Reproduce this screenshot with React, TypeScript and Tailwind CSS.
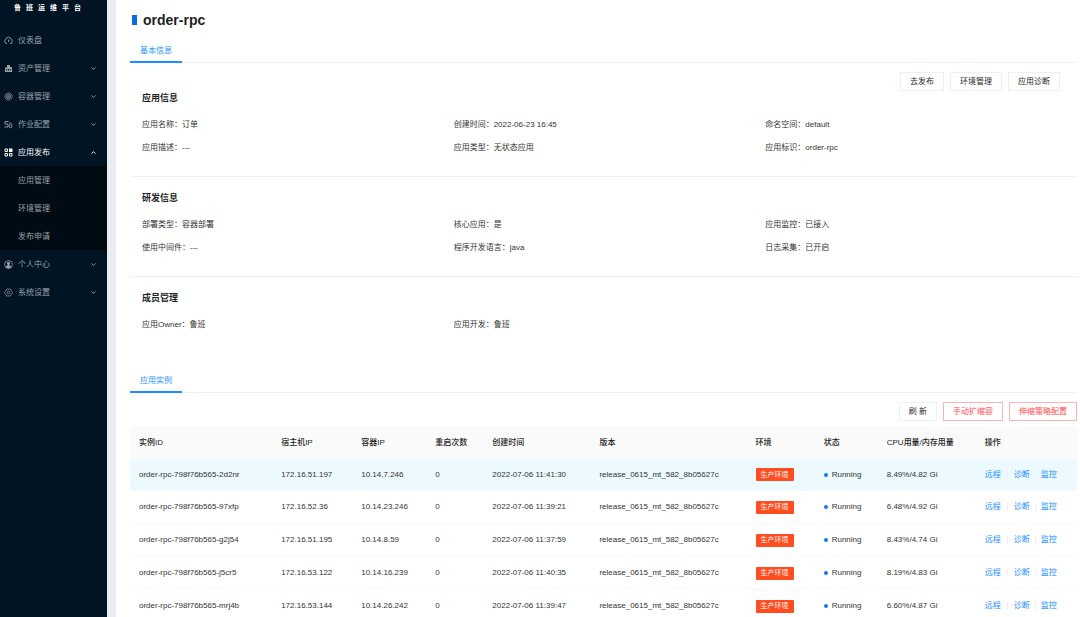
import type { ReactNode } from 'react'
import { ChevronDown, ChevronUp } from 'lucide-react'

interface MenuItem {
  label: string
  icon: ReactNode
  children?: string[]
  open?: boolean
  leaf?: boolean
}

interface Instance {
  id: string
  hostIp: string
  podIp: string
  createdAt: string
  usage: string
}

const iconClass = 'w-[9px] h-[9px] shrink-0'

const menu: MenuItem[] = [
  {
    label: '仪表盘',
    leaf: true,
    icon: (
      <svg className={iconClass} viewBox="0 0 18 18" fill="none" stroke="currentColor" strokeWidth={1.8}>
        <path d="M6 15H3.200A7.500 7.500 0 1 1 14.800 15H12" />
        <path d="M9 12l1-5" strokeWidth={2} />
      </svg>
    ),
  },
  {
    label: '资产管理',
    icon: (
      <svg className={iconClass} viewBox="0 0 18 18" fill="currentColor">
        <path d="M6 2h6v4h4v10H2V7h4zM4.500 10v3h2v-3zm3.500 0v3h2v-3zm3.500 0v3h2v-3z" fillRule="evenodd" />
      </svg>
    ),
  },
  {
    label: '容器管理',
    icon: (
      <svg className={iconClass} viewBox="0 0 18 18" fill="none" stroke="currentColor" strokeWidth={1.8}>
        <circle cx="9" cy="9" r="7.200" strokeDasharray="3 1" />
        <circle cx="9" cy="9" r="4.200" />
        <circle cx="9" cy="9" r="1.400" />
      </svg>
    ),
  },
  {
    label: '作业配置',
    icon: (
      <svg className={iconClass} viewBox="0 0 18 18" fill="none" stroke="currentColor" strokeWidth={1.8}>
        <path d="M9 3H2v5h6v6H1M10 6h3l3 3" />
        <circle cx="13" cy="12.500" r="3" />
      </svg>
    ),
  },
  {
    label: '应用发布',
    open: true,
    children: ['应用管理', '环境管理', '发布申请'],
    icon: (
      <svg className={iconClass} viewBox="0 0 18 18" fill="none" stroke="currentColor" strokeWidth={2}>
        <path d="M2 2h5v5H2zM2 11h5v5H2zM11 11h5v5h-5z" />
        <path d="M10 1h7v7h-7z" fill="currentColor" stroke="none" />
      </svg>
    ),
  },
  {
    label: '个人中心',
    icon: (
      <svg className={iconClass} viewBox="0 0 18 18" fill="none" stroke="currentColor" strokeWidth={1.5}>
        <circle cx="9" cy="9" r="8" />
        <path d="M9 3.5a3 3 0 0 1 1.8 5.5v1.5l3 1.5v2.5a7 7 0 0 1-9.6 0V12l3-1.5V9A3 3 0 0 1 9 3.5z" fill="currentColor" stroke="none" />
      </svg>
    ),
  },
  {
    label: '系统设置',
    icon: (
      <svg className={iconClass} viewBox="0 0 18 18" fill="none" stroke="currentColor" strokeWidth={1.4}>
        <path d="M5.5 2h7L17 9l-4.500 7h-7L1 9z" strokeLinejoin="round" />
        <circle cx="9" cy="9" r="2.600" />
      </svg>
    ),
  },
]

const sections = [
  {
    title: '应用信息',
    fields: [
      ['应用名称', '订单'],
      ['创建时间', '2022-06-23 16:45'],
      ['命名空间', 'default'],
      ['应用描述', '---'],
      ['应用类型', '无状态应用'],
      ['应用标识', 'order-rpc'],
    ],
  },
  {
    title: '研发信息',
    fields: [
      ['部署类型', '容器部署'],
      ['核心应用', '是'],
      ['应用监控', '已接入'],
      ['使用中间件', '---'],
      ['程序开发语言', 'java'],
      ['日志采集', '已开启'],
    ],
  },
  {
    title: '成员管理',
    fields: [
      ['应用Owner', '鲁班'],
      ['应用开发', '鲁班'],
    ],
  },
]

const columns = [
  { title: '实例ID', width: 'w-[142px]' },
  { title: '宿主机IP', width: 'w-[80px]' },
  { title: '容器IP', width: 'w-[74px]' },
  { title: '重启次数', width: 'w-[57px]' },
  { title: '创建时间', width: 'w-[107px]' },
  { title: '版本', width: 'w-[156px]' },
  { title: '环境', width: 'w-[68px]' },
  { title: '状态', width: 'w-[63px]' },
  { title: 'CPU用量/内存用量', width: 'w-[98px]' },
  { title: '操作', width: 'w-[101px]' },
]

const instances: Instance[] = [
  { id: 'order-rpc-798f76b565-2d2nr', hostIp: '172.16.51.197', podIp: '10.14.7.246', createdAt: '2022-07-06 11:41:30', usage: '8.49%/4.82 Gi' },
  { id: 'order-rpc-798f76b565-97xfp', hostIp: '172.16.52.36', podIp: '10.14.23.246', createdAt: '2022-07-06 11:39:21', usage: '6.48%/4.92 Gi' },
  { id: 'order-rpc-798f76b565-g2j54', hostIp: '172.16.51.195', podIp: '10.14.8.59', createdAt: '2022-07-06 11:37:59', usage: '8.43%/4.74 Gi' },
  { id: 'order-rpc-798f76b565-j5cr5', hostIp: '172.16.53.122', podIp: '10.14.16.239', createdAt: '2022-07-06 11:40:35', usage: '8.19%/4.83 Gi' },
  { id: 'order-rpc-798f76b565-mrj4b', hostIp: '172.16.53.144', podIp: '10.14.26.242', createdAt: '2022-07-06 11:39:47', usage: '6.60%/4.87 Gi' },
]

function Sidebar() {
  return (
    <aside className="w-[107px] shrink-0 bg-[#001424] text-[#99a1a7]">
      <div className="h-[26px] pl-[14px] pt-[2px] text-[7px] leading-3 font-bold tracking-[5px] text-white whitespace-nowrap">
        鲁班运维平台
      </div>
      <nav>
        {menu.map((item) => (
          <div key={item.label}>
            <button
              type="button"
              className={`flex h-7 w-full items-center gap-[5px] pl-1 pr-[10px] ${item.open ? 'text-white' : ''}`}
            >
              {item.icon}
              <span className="flex-1 pt-[2px] text-left">{item.label}</span>
              {!item.leaf && (item.open ? <ChevronUp size={7} strokeWidth={3} /> : <ChevronDown size={7} strokeWidth={3} />)}
            </button>
            {item.children && (
              <div className="bg-[#000b14]">
                {item.children.map((child) => (
                  <a key={child} href="#" className="flex h-7 items-center pt-[2px] pl-[18px]">
                    {child}
                  </a>
                ))}
              </div>
            )}
          </div>
        ))}
      </nav>
    </aside>
  )
}

function TabBar({ label }: { label: string }) {
  return (
    <div role="tablist" className="flex h-[23px] border-b border-[#f0f0f0]">
      <button
        type="button"
        role="tab"
        aria-selected="true"
        className="-mb-px h-[23px] border-b-2 border-[#1890ff] px-[10px] text-[#1890ff]"
      >
        {label}
      </button>
    </div>
  )
}

function ActionButton({ children, danger }: { children: ReactNode; danger?: boolean }) {
  return (
    <button
      type="button"
      className={`h-[19px] border bg-white px-[9px] ${danger ? 'border-[#ffb3b5] text-[#ff4d4f]' : 'border-[#f0f0f0] text-[#262626]'}`}
    >
      {children}
    </button>
  )
}

function Section({ title, fields }: { title: string; fields: string[][] }) {
  return (
    <section className="pl-3">
      <h3 className="text-[9px] leading-3 font-bold text-[#1f1f1f]">{title}</h3>
      <dl className="mt-[9px] grid grid-cols-3">
        {fields.map(([name, value]) => (
          <div key={name} className="flex h-[23px] items-center">
            <dt>{name}：</dt>
            <dd>{value}</dd>
          </div>
        ))}
      </dl>
    </section>
  )
}

function InstanceTable() {
  return (
    <table className="w-full table-fixed border-separate border-spacing-0 text-left whitespace-nowrap">
      <thead>
        <tr className="h-8 bg-[#fafafa] text-[#1f1f1f]">
          {columns.map((col) => (
            <th key={col.title} className={`${col.width} p-0 pl-[9px] font-medium`}>
              {col.title}
            </th>
          ))}
        </tr>
      </thead>
      <tbody>
        {instances.map((row, i) => (
          <tr
            key={row.id}
            className={`${i === 0 ? 'h-8 bg-[#ecf9fe]' : 'h-[33px]'} [&>td]:border-b [&>td]:border-[#f9f9f9] [&>td]:p-0 [&>td]:pl-[9px]`}
          >
            <td>{row.id}</td>
            <td>{row.hostIp}</td>
            <td>{row.podIp}</td>
            <td>0</td>
            <td>{row.createdAt}</td>
            <td>release_0615_mt_582_8b05627c</td>
            <td>
              <span className="inline-flex h-[13px] items-center rounded-[1px] bg-[#ff4d1f] px-[5px] text-[7px] text-white">生产环境</span>
            </td>
            <td>
              <span className="flex items-center gap-1">
                <i className="h-[4px] w-[4px] rounded-full bg-[#1677e0]" />
                Running
              </span>
            </td>
            <td>{row.usage}</td>
            <td>
              <span className="flex items-center text-[#1890ff]">
                <a href="#">远程</a>
                <i className="mx-[6px] h-2 w-px bg-[#f0f0f0]" />
                <a href="#">诊断</a>
                <i className="mx-[5px] h-2 w-px bg-[#f0f0f0]" />
                <a href="#">监控</a>
              </span>
            </td>
          </tr>
        ))}
      </tbody>
    </table>
  )
}

export default function App() {
  return (
    <div className="flex h-screen overflow-hidden bg-[#e9edf2] font-['Liberation_Sans','Noto_Sans_CJK_SC',sans-serif] text-[8px] leading-3 text-[#333]">
      <Sidebar />
      <main className="ml-[9px] min-w-0 flex-1 overflow-y-auto bg-white pt-[10px] pr-[3px] pl-[14px] [scrollbar-width:none]">
        <h1 className="flex h-5 items-center gap-[6px] pl-[2px] text-sm leading-5 font-bold text-[#1f1f1f]">
          <span className="h-[10px] w-[5px] bg-[#0b6be0]" />
          order-rpc
        </h1>
        <div className="mt-[10px]">
          <TabBar label="基本信息" />
        </div>
        <div className="mt-[9px] flex justify-end gap-[6px] pr-[17px]">
          <ActionButton>去发布</ActionButton>
          <ActionButton>环境管理</ActionButton>
          <ActionButton>应用诊断</ActionButton>
        </div>
        <div className="mt-px flex flex-col">
          {sections.map((section, i) => (
            <div key={section.title} className={i > 0 ? 'mt-[17px] border-t border-[#f0f0f0] pt-[15px]' : ''}>
              <Section title={section.title} fields={section.fields} />
            </div>
          ))}
        </div>
        <div className="mt-[34px]">
          <TabBar label="应用实例" />
        </div>
        <div className="mt-[9px] mb-[6px] flex justify-end gap-[6px]">
          <ActionButton>刷 新</ActionButton>
          <ActionButton danger>手动扩缩容</ActionButton>
          <ActionButton danger>伸缩策略配置</ActionButton>
        </div>
        <InstanceTable />
      </main>
    </div>
  )
}
